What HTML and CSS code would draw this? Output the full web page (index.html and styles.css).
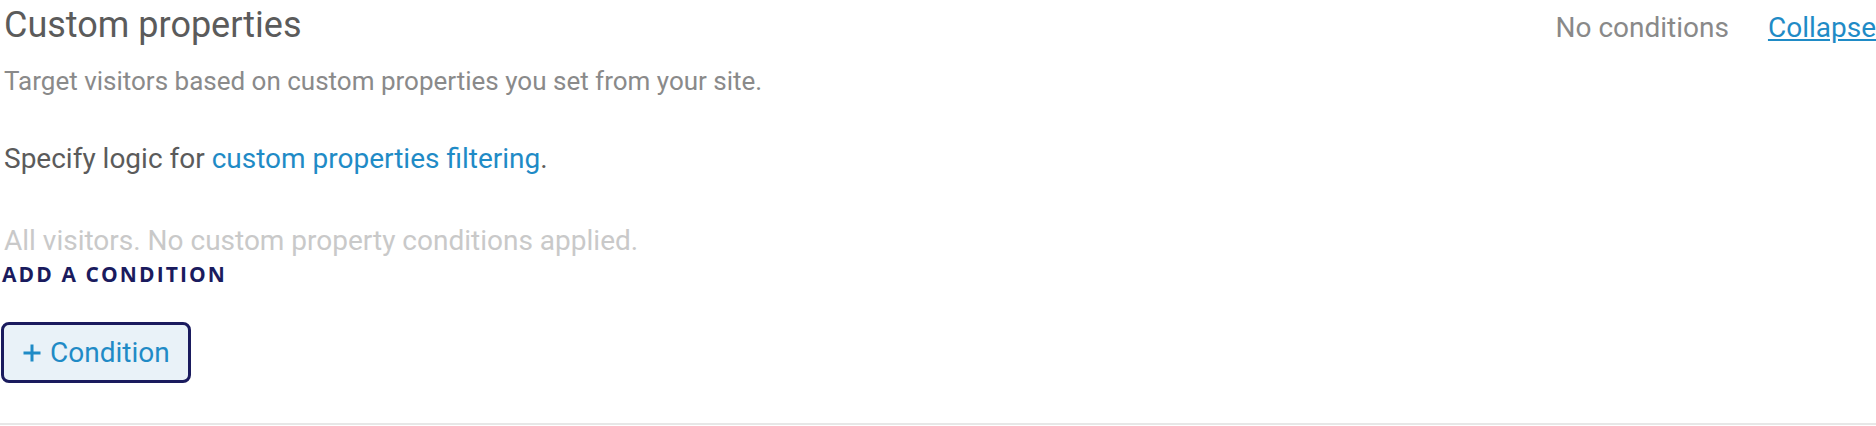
FILE: index.html
```html
<!DOCTYPE html>
<html lang="en">
<head>
  <meta charset="UTF-8">
  <meta name="viewport" content="width=device-width, initial-scale=1.0">
  <title>Custom properties</title>
  <link rel="stylesheet" href="styles.css">
</head>
<body>
  <div class="panel">
    <div class="panel-head">
      <h2 class="panel-title">Custom properties</h2>
      <div class="panel-meta">
        <span class="status">No conditions</span>
        <a href="#" class="toggle">Collapse</a>
      </div>
    </div>

    <p class="hint">Target visitors based on custom properties you set from your site.</p>
    <p class="logic">Specify logic for <a href="#">custom properties filtering</a>.</p>
    <p class="empty">All visitors. No custom property conditions applied.</p>

    <h3 class="section-label">ADD A CONDITION</h3>
    <button type="button" class="add-btn">
      <svg class="plus" width="18" height="18" viewBox="0 0 18 18">
        <path d="M9 0.5v17M0.5 9h17" stroke="currentColor" stroke-width="3" fill="none"/>
      </svg>
      Condition
    </button>
  </div>
</body>
</html>
```

FILE: styles.css
```css
body {
  font-family: Roboto, "Liberation Sans", sans-serif;
  background: #fff;
  margin: 0;
  padding: 0;
}

a {
  color: #1f8bc6;
  text-decoration: none;
}

.panel {
  padding: 3px 0 40px 0;
  border-bottom: 2px solid #e7e7e7;
}

.panel-head {
  display: flex;
  justify-content: space-between;
  align-items: baseline;
  padding-left: 4px;
}

.panel-title {
  margin: 0;
  font-size: 36px;
  line-height: 44px;
  font-weight: 400;
  color: #5b5b5b;
}

.panel-meta {
  display: flex;
  align-items: baseline;
  gap: 39px;
  font-size: 28px;
}

.status {
  color: #898989;
}

.toggle {
  text-decoration: underline;
}

.hint, .logic, .empty {
  margin: 0;
  padding-left: 4px;
  line-height: 36px;
}

.hint {
  margin-top: 16px;
  font-size: 26px;
  color: #8a8a8a;
}

.logic {
  margin-top: 42px;
  font-size: 28px;
  color: #5b5b5b;
}

.empty {
  margin-top: 46px;
  font-size: 28px;
  color: #c9c9c9;
}

.section-label {
  margin: 3px 0 0 2px;
  font-family: "Open Sans", "Liberation Sans", sans-serif;
  font-size: 21px;
  line-height: 24px;
  font-weight: 700;
  letter-spacing: 0.1em;
  color: #1a1b5e;
}

.add-btn {
  display: flex;
  align-items: center;
  gap: 9px;
  margin: 36px 0 0 1px;
  padding: 12px 18px 12px 19px;
  font-family: Roboto, "Liberation Sans", sans-serif;
  font-size: 28px;
  line-height: 31px;
  color: #1f8bc6;
  background: #e9f2f8;
  border: 3px solid #1a1b5e;
  border-radius: 8px;
  cursor: pointer;
}

.plus {
  display: block;
}
```
